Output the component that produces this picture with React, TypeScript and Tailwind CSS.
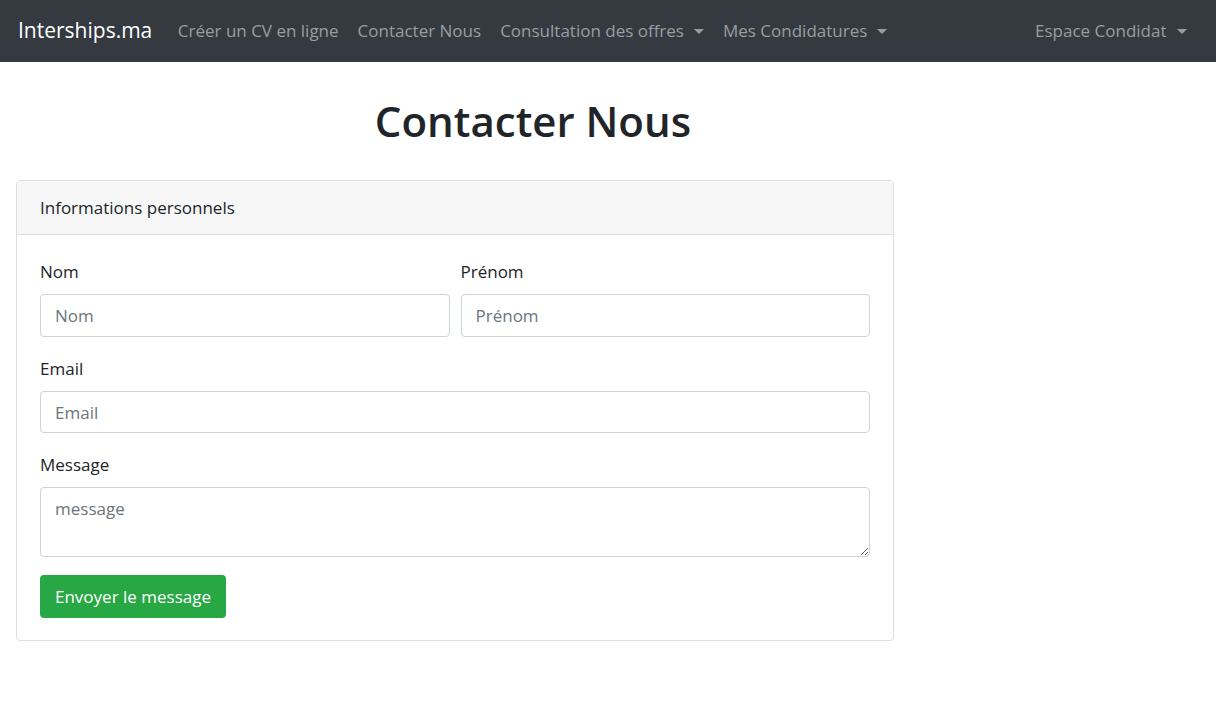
import { useState } from "react"

const font = { fontFamily: '"Open Sans", "Noto Sans", "Liberation Sans", sans-serif' }

function Caret() {
  return <span className="ml-[10px] inline-block h-0 w-0 border-x-[5px] border-t-[5px] border-x-transparent border-t-[#9a9da0] align-middle" />
}

function NavLink({ label, caret }: { label: string; caret?: boolean }) {
  return (
    <a href="#" className="flex items-center px-[9.5px] text-[17px] text-[#9a9da0] hover:text-[#c8cacc]">
      {label}
      {caret && <Caret />}
    </a>
  )
}

function Field({ label, placeholder }: { label: string; placeholder: string }) {
  return (
    <div className="flex-1">
      <label className="mb-[10px] block h-6 text-[17px] leading-6 text-[#212529]">{label}</label>
      <input
        placeholder={placeholder}
        className="h-[43px] w-full rounded-[4px] border border-[#ced4da] px-[14px] text-[17px] text-[#495057] outline-none placeholder:text-[#6c757d] focus:border-[#80bdff]"
      />
    </div>
  )
}

export default function App() {
  const [msg, setMsg] = useState("")

  return (
    <div className="min-h-screen bg-white" style={font}>
      <nav className="flex h-[62px] items-center bg-[#343a40] pl-[18px] pr-[20px]">
        <a href="#" className="mr-[16px] text-[21px] text-white">Interships.ma</a>
        <NavLink label="Créer un CV en ligne" />
        <NavLink label="Contacter Nous" />
        <NavLink label="Consultation des offres" caret />
        <NavLink label="Mes Condidatures" caret />
        <div className="ml-auto">
          <NavLink label="Espace Condidat" caret />
        </div>
      </nav>

      <div className="flex h-[116px] w-[1066px] items-center justify-center">
        <h1 className="text-[42px] font-semibold text-[#212529]">Contacter Nous</h1>
      </div>

      <div className="ml-4 mt-[2px] w-[878px] rounded-[4px] border border-[#dfdfdf]">
        <div className="flex h-[54px] items-center border-b border-[#dfdfdf] bg-[#f7f7f7] px-[23px] text-[17px] text-[#212529]">
          Informations personnels
        </div>
        <div className="px-[23px] pb-[22px] pt-[25px]">
          <div className="flex gap-[11px]">
            <Field label="Nom" placeholder="Nom" />
            <Field label="Prénom" placeholder="Prénom" />
          </div>
          <div className="mt-5">
            <label className="mb-[10px] block h-6 text-[17px] leading-6 text-[#212529]">Email</label>
            <input
              placeholder="Email"
              className="h-[42px] w-full rounded-[4px] border border-[#ced4da] px-[14px] text-[17px] text-[#495057] outline-none placeholder:text-[#6c757d]"
            />
          </div>
          <div className="mt-5">
            <label className="mb-[10px] block h-6 text-[17px] leading-6 text-[#212529]">Message</label>
            <textarea
              value={msg}
              onChange={(e) => setMsg(e.target.value)}
              placeholder="message"
              className="block h-[70px] w-full rounded-[4px] border border-[#ced4da] px-[14px] py-[8px] text-[17px] text-[#495057] outline-none placeholder:text-[#6c757d]"
            />
          </div>
          <button className="mt-[18px] h-[43px] rounded-[4px] bg-[#28a745] px-[15px] text-[17px] text-white hover:bg-[#218838]">
            Envoyer le message
          </button>
        </div>
      </div>
    </div>
  )
}
